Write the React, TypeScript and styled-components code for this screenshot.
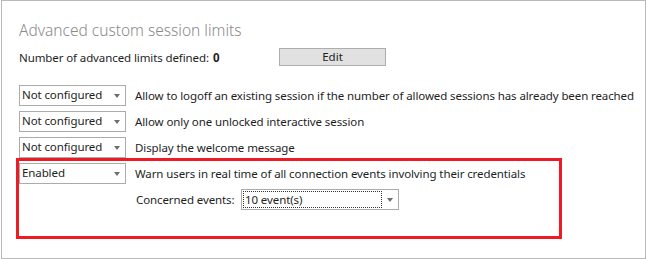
import styled, { createGlobalStyle } from "styled-components";

const GlobalStyle = createGlobalStyle`
  html, body {
    margin: 0;
    padding: 0;
    background: #ffffff;
  }
  body {
    font-family: "Noto Sans", "Open Sans", sans-serif;
    font-size: 11.5px;
    letter-spacing: -0.1px;
    color: #1e1e1e;
  }
`;

const Panel = styled.div`
  box-sizing: border-box;
  width: 645px;
  height: 259px;
  margin-left: 1px;
  border: 1px solid #b9b9b9;
  padding: 18px 0 0 17px;
  overflow: hidden;
`;

const Title = styled.h2`
  margin: 0;
  font-size: 15.5px;
  font-weight: 300;
  line-height: 22px;
  letter-spacing: 0;
  color: #8a8a8a;
`;

const CountRow = styled.div`
  display: flex;
  align-items: center;
  height: 18px;
  margin-top: 7px;
`;

const CountLabel = styled.span`
  width: 260px;
  white-space: nowrap;
`;

const Count = styled.b`
  margin-left: 4px;
  font-weight: 700;
`;

const Button = styled.button`
  box-sizing: border-box;
  width: 107px;
  height: 18px;
  padding: 0;
  border: 1px solid #adadad;
  background: #e1e1e1;
  font-family: inherit;
  font-size: 11.5px;
  color: #1e1e1e;
  line-height: 16px;
`;

const Rules = styled.div`
  display: flex;
  flex-direction: column;
  gap: 5px;
  margin-top: 19px;
`;

const Row = styled.div`
  display: flex;
  align-items: center;
  gap: 9px;
  white-space: nowrap;
`;

const Select = styled.div<{ $width: number; $focused?: boolean }>`
  box-sizing: border-box;
  position: relative;
  flex: none;
  width: ${(p) => p.$width}px;
  height: 21px;
  border: 1px solid #ababab;
  background: #fff;
  padding: ${(p) => (p.$focused ? "1px" : "0")};
`;

const Value = styled.div<{ $focused?: boolean }>`
  box-sizing: border-box;
  height: ${(p) => (p.$focused ? "17px" : "19px")};
  width: calc(100% - 15px);
  padding-left: ${(p) => (p.$focused ? "1px" : "2px")};
  line-height: ${(p) => (p.$focused ? "15px" : "18px")};
  border: ${(p) => (p.$focused ? "1px dotted #333" : "none")};
`;

const Arrow = styled.span`
  position: absolute;
  right: 5px;
  top: 8px;
  width: 0;
  height: 0;
  border-left: 3.5px solid transparent;
  border-right: 3.5px solid transparent;
  border-top: 4px solid #6d6d6d;
`;

const Highlight = styled.div`
  box-sizing: border-box;
  width: 546px;
  margin: -5px 0 0 -3px;
  border: 3px solid #ed1c24;
  padding: 2px 0 26px 0;
  display: flex;
  flex-direction: column;
  gap: 5px;
`;

const SubRow = styled.div`
  display: flex;
  align-items: center;
  padding-left: 117px;
  white-space: nowrap;
`;

const SubLabel = styled.span`
  width: 105px;
`;

type DropdownProps = { value: string; width?: number; focused?: boolean };

function Dropdown({ value, width = 107, focused }: DropdownProps) {
  return (
    <Select $width={width} $focused={focused}>
      <Value $focused={focused}>{value}</Value>
      <Arrow />
    </Select>
  );
}

const rules = [
  {
    value: "Not configured",
    label:
      "Allow to logoff an existing session if the number of allowed sessions has already been reached",
  },
  { value: "Not configured", label: "Allow only one unlocked interactive session" },
  { value: "Not configured", label: "Display the welcome message" },
];

export default function App() {
  return (
    <>
      <GlobalStyle />
      <Panel>
        <Title>Advanced custom session limits</Title>
        <CountRow>
          <CountLabel>
            Number of advanced limits defined:<Count>0</Count>
          </CountLabel>
          <Button>Edit</Button>
        </CountRow>
        <Rules>
          {rules.map((r) => (
            <Row key={r.label}>
              <Dropdown value={r.value} />
              <span>{r.label}</span>
            </Row>
          ))}
          <Highlight>
            <Row>
              <Dropdown value="Enabled" />
              <span>
                Warn users in real time of all connection events involving their
                credentials
              </span>
            </Row>
            <SubRow>
              <SubLabel>Concerned events:</SubLabel>
              <Dropdown value="10 event(s)" width={158} focused />
            </SubRow>
          </Highlight>
        </Rules>
      </Panel>
    </>
  );
}
